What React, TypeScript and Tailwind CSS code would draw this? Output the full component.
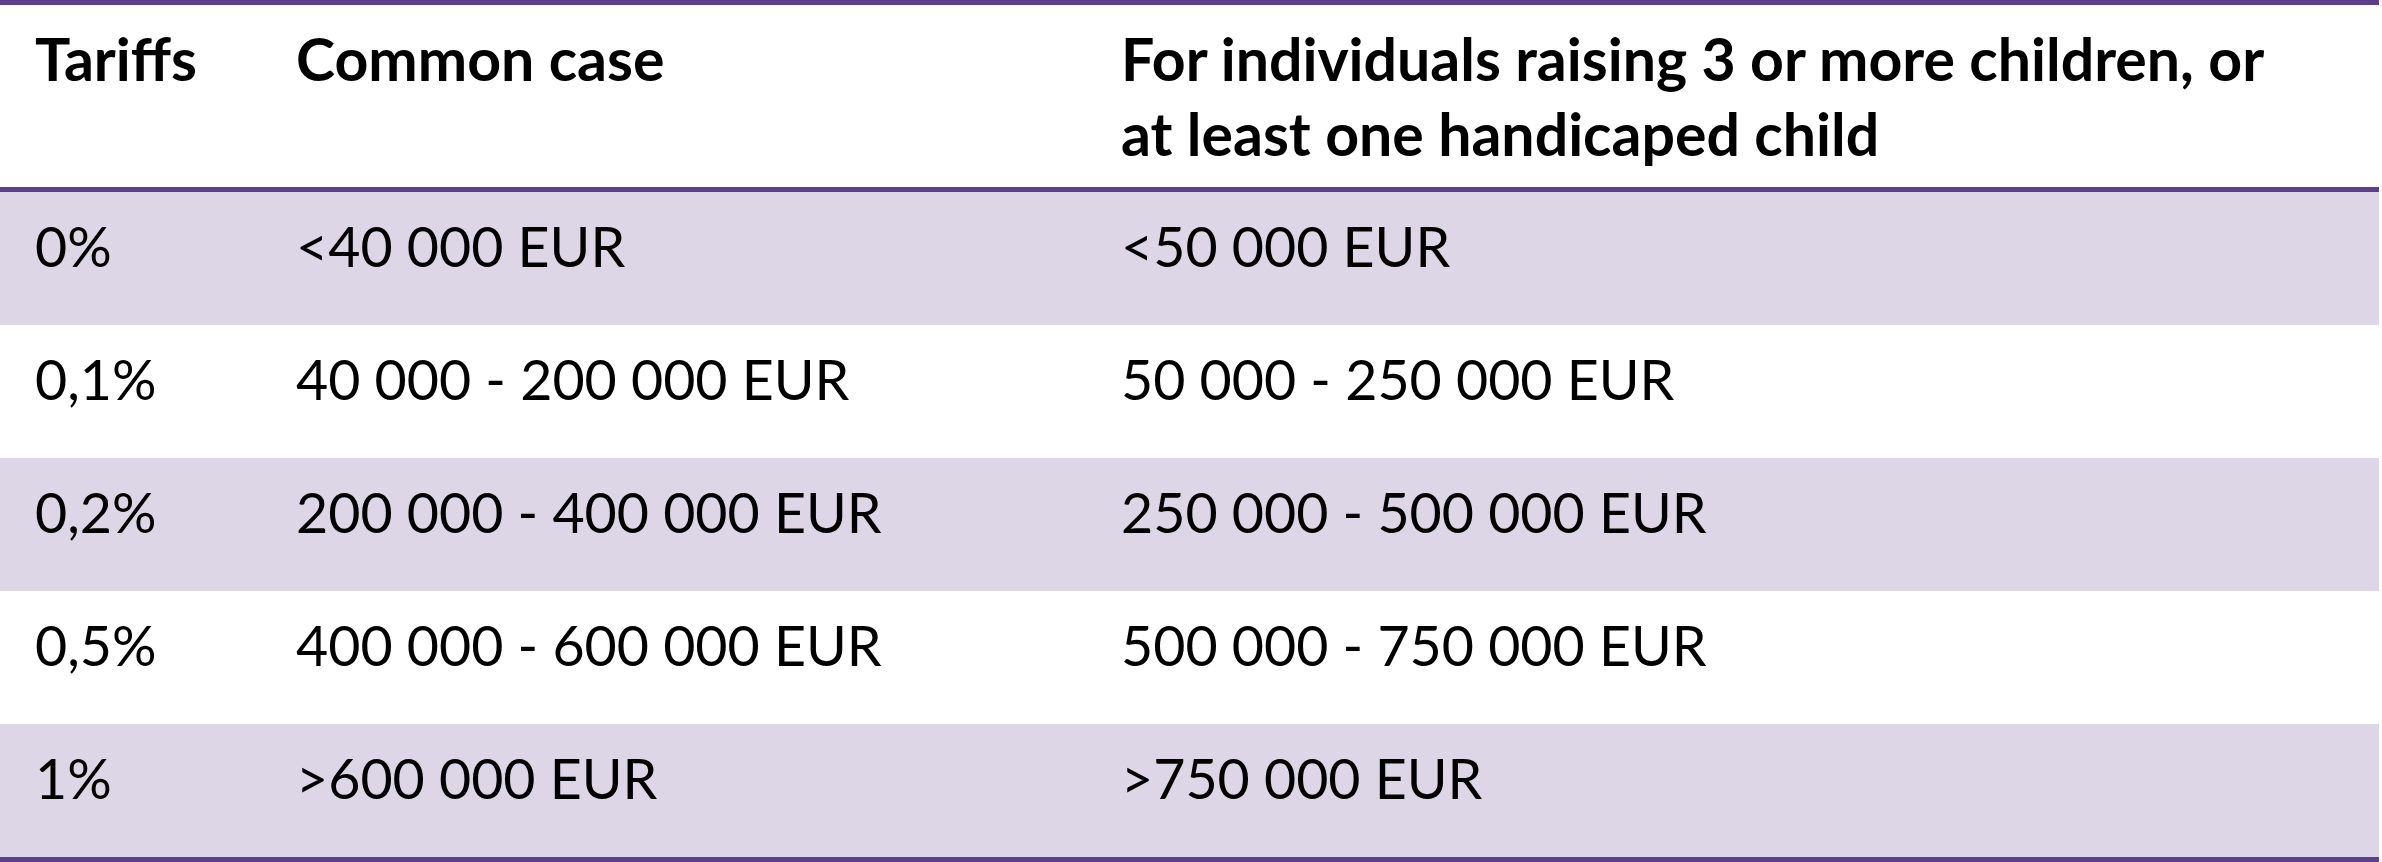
const rows = [
  ["0%", "<40 000 EUR", "<50 000 EUR"],
  ["0,1%", "40 000 - 200 000 EUR", "50 000 - 250 000 EUR"],
  ["0,2%", "200 000 - 400 000 EUR", "250 000 - 500 000 EUR"],
  ["0,5%", "400 000 - 600 000 EUR", "500 000 - 750 000 EUR"],
  ["1%", ">600 000 EUR", ">750 000 EUR"],
];

export default function App() {
  return (
    <div className="h-[862px] w-[2382px] bg-white font-['Lato',sans-serif] text-black">
      <div className="w-[2379px] border-y-[5px] border-[#5e3f8c]">
        <div className="grid h-[187px] grid-cols-[261px_825px_1fr] border-b-[5px] border-[#5e3f8c] text-[59px] font-bold leading-[75px]">
          <div className="pl-[35px] pt-[16px]">Tariffs</div>
          <div className="pl-[35px] pt-[16px]">Common case</div>
          <div className="pl-[35px] pt-[16px]">
            <div className="max-w-[1180px]">
              For individuals raising 3 or more children, or at least one handicaped child
            </div>
          </div>
        </div>
        {rows.map((r, i) => (
          <div
            key={r[0]}
            className={
              "grid h-[133px] grid-cols-[261px_825px_1fr] text-[55.5px] leading-[1.2] " +
              (i % 2 === 0 ? "bg-[#dcd6e7]" : "bg-white")
            }
          >
            {r.map((c, j) => (
              <div key={j} className="pl-[35px] pt-[21px]">
                {c}
              </div>
            ))}
          </div>
        ))}
      </div>
    </div>
  );
}
